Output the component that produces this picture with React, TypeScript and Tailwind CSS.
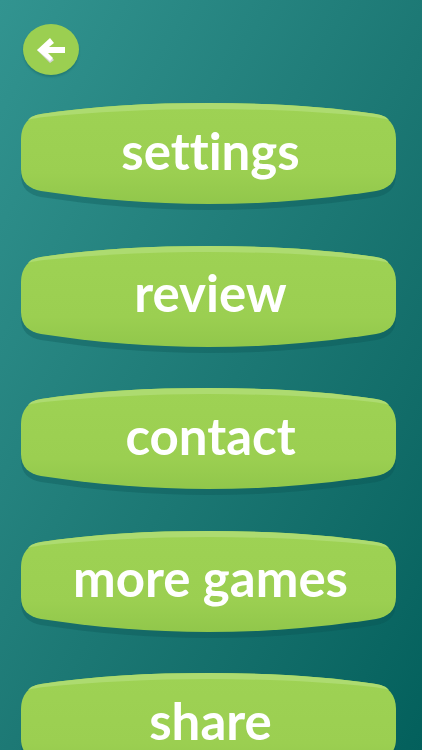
import React from 'react';

const items = ['settings', 'review', 'contact', 'more games', 'share'];

const pillPath =
  'M0 36 C0 22 8 13 20 11 C72 3 130 0 187.5 0 C245 0 303 3 355 11 C367 13 375 22 375 36 L375 66 C375 79 367 86 355 88 C303 96 245 101 187.5 101 C130 101 72 96 20 88 C8 86 0 79 0 66 Z';

const highlightPath =
  'M7 17 C10 13 15 12 20 11 C72 3 130 0 187.5 0 C245 0 303 3 355 11 C360 12 365 13 368 17 C362 15 358 15 352 14 C303 9 245 6 187.5 6 C130 6 72 9 23 14 C17 15 13 15 7 17 Z';

function MenuButton({ label, id }: { label: string; id: string }) {
  return (
    <button className="relative w-[375px] h-[101px] shrink-0 flex items-center justify-center">
      <svg className="absolute left-0 top-0 overflow-visible" width="375" height="101" viewBox="0 0 375 101">
        <defs>
          <linearGradient id={id} x1="0" y1="0" x2="0" y2="1">
            <stop offset="0" stopColor="#9ed254" />
            <stop offset="0.7" stopColor="#9bcf51" />
            <stop offset="1" stopColor="#91c74b" />
          </linearGradient>
        </defs>
        <path d={pillPath} fill="#0b4f4e" fillOpacity="0.3" transform="translate(0 6)" />
        <path d={pillPath} fill={`url(#${id})`} />
        <path d={highlightPath} fill="#addb70" />
      </svg>
      <span className="relative text-white font-bold text-[51px] leading-none font-['Lato',sans-serif] [font-variant-ligatures:none] -mt-[7px] ml-[4px]">
        {label}
      </span>
    </button>
  );
}

export default function App() {
  return (
    <div className="w-[422px] h-[750px] overflow-hidden bg-gradient-to-br from-[#329490] to-[#03605c]">
      <button className="relative block ml-[23px] mt-[24px] w-[56px] h-[51px] rounded-[50%] bg-[#9bcf51] shadow-[0_2px_2px_rgba(11,79,78,0.3)]">
        <svg className="absolute left-0 top-0" width="56" height="51" viewBox="0 0 56 51">
          <path d="M14 26 L27 39 L31 36 L19 24 Z" fill="#d6d6d6" />
          <path d="M14 26 L27 14 L31 19 L26 23 L42 23 L42 29 L25 29 L30 34 L27 37 Z" fill="#ffffff" />
        </svg>
      </button>
      <div className="flex flex-col gap-[41.5px] items-start ml-[21px] mt-[28px]">
        {items.map((item, i) => (
          <MenuButton key={item} label={item} id={`pill-${i}`} />
        ))}
      </div>
    </div>
  );
}
